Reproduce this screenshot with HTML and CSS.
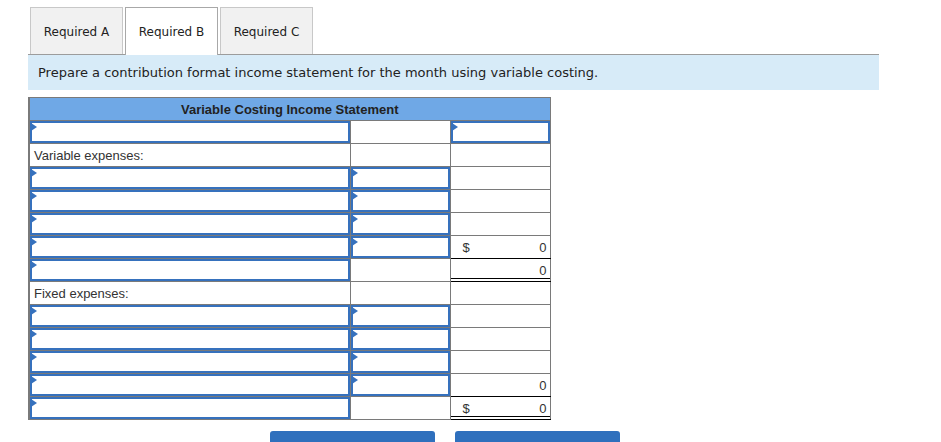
FILE: index.html
```html
<!DOCTYPE html>
<html>
<head>
<meta charset="utf-8">
<link rel="stylesheet" href="styles.css">
</head>
<body>
<div class="page">
  <div class="tabs">
    <div class="tab">Required A</div>
    <div class="tab active">Required B</div>
    <div class="tab">Required C</div>
  </div>
  <div class="instr">Prepare a contribution format income statement for the month using variable costing.</div>

  <table class="stmt">
    <colgroup><col class="c1"><col class="c2"><col class="c3"></colgroup>
    <tr><th colspan="3">Variable Costing Income Statement</th></tr>
    <tr><td><div class="inp"></div></td><td></td><td><div class="inp"></div></td></tr>
    <tr><td class="lbl">Variable expenses:</td><td></td><td></td></tr>
    <tr><td><div class="inp"></div></td><td><div class="inp"></div></td><td></td></tr>
    <tr><td><div class="inp"></div></td><td><div class="inp"></div></td><td></td></tr>
    <tr><td><div class="inp"></div></td><td><div class="inp"></div></td><td></td></tr>
    <tr><td><div class="inp"></div></td><td><div class="inp"></div></td><td class="num single"><span class="cur">$</span><span>0</span></td></tr>
    <tr><td><div class="inp"></div></td><td></td><td class="num double"><span class="cur"></span><span>0</span></td></tr>
    <tr><td class="lbl">Fixed expenses:</td><td></td><td></td></tr>
    <tr><td><div class="inp"></div></td><td><div class="inp"></div></td><td></td></tr>
    <tr><td><div class="inp"></div></td><td><div class="inp"></div></td><td></td></tr>
    <tr><td><div class="inp"></div></td><td><div class="inp"></div></td><td></td></tr>
    <tr><td><div class="inp"></div></td><td><div class="inp"></div></td><td class="num single"><span class="cur"></span><span>0</span></td></tr>
    <tr><td><div class="inp"></div></td><td></td><td class="num double"><span class="cur">$</span><span>0</span></td></tr>
  </table>

  <div class="nav">
    <button class="btn">&lt; Required A</button>
    <button class="btn">Required C &gt;</button>
  </div>
</div>
</body>
</html>
```

FILE: styles.css
```css
html, body {
  margin: 0;
  padding: 0;
  background: #fff;
}

.page {
  padding: 7px 0 0 28px;
  width: 851px;
}

.tabs {
  display: flex;
  align-items: flex-start;
  gap: 2px;
  padding-left: 2px;
  border-bottom: 1px solid #9c9c9c;
  height: 47px;
}

.tab {
  width: 93px;
  height: 47px;
  box-sizing: border-box;
  padding-top: 1px;
  border: 1px solid #c8c8c8;
  border-bottom: none;
  background: #f1f1f1;
  font-family: "DejaVu Sans", Verdana, sans-serif;
  font-size: 12px;
  color: #222;
  display: flex;
  align-items: center;
  justify-content: center;
}

.tab.active {
  background: #fff;
  border-color: #a8a8a8;
  height: 48px;
  padding-bottom: 1px;
}

.instr {
  background: #d7ebf8;
  height: 35px;
  box-sizing: border-box;
  padding-left: 10px;
  display: flex;
  align-items: center;
  font-family: "DejaVu Sans", Verdana, sans-serif;
  font-size: 13px;
  color: #222;
}

.stmt {
  margin-top: 7px;
  border-collapse: collapse;
  table-layout: fixed;
  width: 522px;
  border: 1px solid #7a7a7a;
  border-left-width: 2px;
  font-family: "Liberation Sans", Arial, sans-serif;
  font-size: 13px;
  color: #333;
}

.c1 { width: 321px; }
.c2 { width: 100px; }
.c3 { width: 100px; }

.stmt th {
  background: #6fa8e6;
  height: 22px;
  padding: 0;
  border: 1px solid #7a7a7a;
  font-weight: bold;
  font-size: 13px;
  color: #222;
  text-align: center;
}

.stmt td {
  height: 22px;
  padding: 0;
  border: 1px solid #7a7a7a;
  vertical-align: middle;
}

.stmt td.lbl {
  padding-left: 4px;
}

.inp {
  position: relative;
  height: 22px;
  box-sizing: border-box;
  border: 2px solid #3671bd;
  background: #fff;
}

.inp::before {
  content: "";
  position: absolute;
  left: -1px;
  top: 0;
  border-top: 4px solid transparent;
  border-bottom: 4px solid transparent;
  border-left: 6px solid #3671bd;
}

.stmt td.num {
  padding: 0 3px 0 12px;
  white-space: nowrap;
}

.num span {
  display: inline-block;
}

.num .cur {
  width: 64px;
}

.num span:last-child {
  width: 20px;
  text-align: right;
}

.stmt td.single {
  border-bottom: 1px solid #000;
}

.stmt td.double {
  border-bottom: 1px solid #000;
  background: linear-gradient(#000, #000) left bottom 2px / 100% 1px no-repeat;
}

.nav {
  display: flex;
  align-items: flex-start;
  gap: 20px;
  padding-left: 242px;
  margin-top: 11px;
}

.btn {
  width: 165px;
  height: 36px;
  margin: 0;
  border: none;
  border-radius: 3px;
  background: #2f70bd;
  color: #fff;
  font-family: "DejaVu Sans", Verdana, sans-serif;
  font-size: 13px;
  padding: 10px 0 0;
}
```
